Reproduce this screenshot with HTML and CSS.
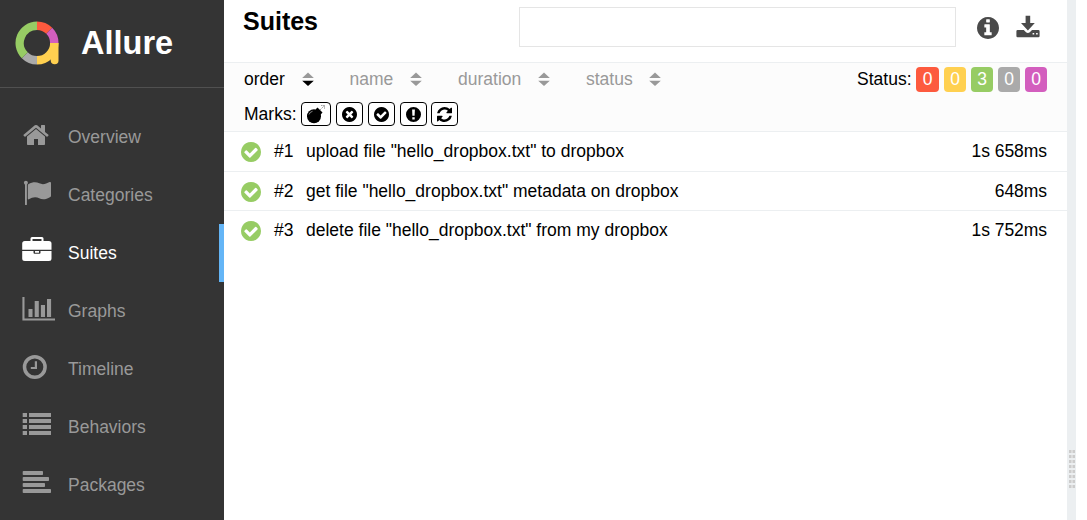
FILE: index.html
```html
<!DOCTYPE html>
<html lang="en">
<head>
<meta charset="utf-8">
<title>Allure Report</title>
<link rel="stylesheet" href="styles.css">
</head>
<body>
<svg class="defs" aria-hidden="true">
  <symbol id="check" viewBox="128 128 1536 1536"><path d="M1412 734q0-28-18-46l-91-90q-19-19-45-19t-45 19l-408 407-226-226q-19-19-45-19t-45 19l-91 90q-18 18-18 46 0 27 18 45l362 362q19 19 45 19 27 0 46-19l543-543q18-18 18-45zm252 162q0 209-103 385.5t-279.5 279.5-385.5 103-385.5-103-279.5-279.5-103-385.5 103-385.5 279.5-279.5 385.5-103 385.5 103 279.5 279.5 103 385.5z"/></symbol>
  <symbol id="sorter" viewBox="0 0 12 14"><path class="up" d="M6 .5L11.8 6H.2z"/><path class="down" d="M.2 8.7h11.6L6 14z"/></symbol>
</svg>
<div class="app">
  <aside class="side">
    <div class="brand">
      <svg class="logo" width="44" height="44" viewBox="0 0 44 44" fill="none" stroke-width="8.4">
        <path stroke="#ffd050" d="M39.3 22A17.3 17.3 0 0 1 22 39.3"/>
        <path stroke="#aaa" d="M22 39.3A17.3 17.3 0 0 1 9.77 34.23"/>
        <path stroke="#97cc64" d="M9.77 34.23A17.3 17.3 0 0 1 22 4.7"/>
        <path stroke="#fd5a3e" d="M22 4.7A17.3 17.3 0 0 1 34.23 9.77"/>
        <path stroke="#d35ebe" d="M34.23 9.77A17.3 17.3 0 0 1 39.3 22"/>
        <path fill="#ffd050" d="M35.1 22h8.4v17.5q0 3.8-3.8 3.8t-4-3.8z"/>
      </svg>
      <span class="brand-name">Allure</span>
    </div>
    <nav class="nav">
      <a class="item"><svg class="nav-icon" viewBox="0 0 36 30"><path transform="translate(2 1) scale(.015625)" d="M1472 992v480q0 26-19 45t-45 19h-384v-384h-256v384h-384q-26 0-45-19t-19-45v-480q0-1 .5-3t.5-3l575-474 575 474q1 2 1 6zm223-69l-62 74q-8 9-21 11h-3q-13 0-21-7l-692-577-692 577q-12 8-24 7-13-2-21-11l-62-74q-8-10-7-23.5t11-21.5l719-599q32-26 76-26t76 26l244 204v-195q0-14 9-23t23-9h192q14 0 23 9t9 23v408l219 182q10 8 11 21.5t-7 23.5z"/></svg><span>Overview</span></a>
      <a class="item"><svg class="nav-icon" viewBox="0 0 36 30"><circle cx="5.9" cy="4.8" r="2"/><rect x="5" y="5" width="1.9" height="22" rx=".5"/><path d="M7.8 7.2q0-.5.5-.9c2.500-1.400 4.500-2 6.600-2 3.500 0 5.400 1.900 8 1.900 2.200 0 4.300-1.100 6.700-2.200q1.400-.4 1.400.9v13q0 .7-.7 1c-2.600 1.400-4.700 2.300-7 2.300-3.300 0-4.900-2-8.200-2-2.100 0-4.200.9-6.200 2.100q-1.100.4-1.100-.7z"/></svg><span>Categories</span></a>
      <a class="item active"><svg class="nav-icon" viewBox="0 0 36 30"><path fill-rule="evenodd" d="M10.500 5V2.600q0-1.500 1.500-1.500h10q1.500 0 1.500 1.500V5h5.400q2.600 0 2.600 2.600v6.200H2.200V7.600Q2.200 5 4.800 5zm2 0h9V3.100h-9zM2.200 15h11.300v1.800q0 1 1 1h5q1 0 1-1V15h11v7.500q0 2.500-2.600 2.500H4.800q-2.600 0-2.600-2.500zM15 15h4v1.700h-4z"/></svg><span>Suites</span></a>
      <a class="item"><svg class="nav-icon" viewBox="0 0 36 30"><path d="M2.400 3h2.100v21.500H35v2H2.400zM8.500 15h4v8h-4zM14.700 7h4.100v16h-4.100zM20.900 11H25v12h-4.100zM27 5h4.100v18H27z"/></svg><span>Graphs</span></a>
      <a class="item"><svg class="nav-icon" viewBox="0 0 36 30"><circle cx="14.800" cy="15" r="10.300" fill="none" stroke="currentColor" stroke-width="3.500"/><path d="M14.800 9.200h2.200v7.900h-6.200v-2.100h4z"/></svg><span>Timeline</span></a>
      <a class="item"><svg class="nav-icon" viewBox="0 0 36 30"><path d="M2.700 3H7v4H2.700zM9 3h22v4H9zM2.700 9H7v4H2.700zM9 9h22v4H9zM2.700 15H7v4H2.700zM9 15h22v4H9zM2.700 21H7v4H2.700zM9 21h22v4H9z"/></svg><span>Behaviors</span></a>
      <a class="item"><svg class="nav-icon" viewBox="0 0 36 30"><rect x="2.700" y="3" width="20.300" height="4" rx=".8"/><rect x="2.700" y="9" width="26.300" height="4" rx=".8"/><rect x="2.700" y="15" width="22.300" height="4" rx=".8"/><rect x="2.700" y="21" width="28.300" height="4" rx=".8"/></svg><span>Packages</span></a>
    </nav>
  </aside>
  <main class="main">
    <header class="head">
      <h1 class="title">Suites</h1>
      <input class="search" type="text" aria-label="Search">
      <svg class="info" width="22" height="22" viewBox="128 128 1536 1536"><path d="M1152 1376v-160q0-14-9-23t-23-9h-96v-512q0-14-9-23t-23-9h-320q-14 0-23 9t-9 23v160q0 14 9 23t23 9h96v320h-96q-14 0-23 9t-9 23v160q0 14 9 23t23 9h448q14 0 23-9t9-23zm-128-896v-160q0-14-9-23t-23-9h-192q-14 0-23 9t-9 23v160q0 14 9 23t23 9h192q14 0 23-9t9-23zm640 416q0 209-103 385.5t-279.5 279.5-385.5 103-385.5-103-279.5-279.5-103-385.5 103-385.5 279.5-279.5 385.5-103 385.5 103 279.5 279.5 103 385.5z"/></svg>
      <svg class="download" width="24" height="23" viewBox="0 0 24 23"><path fill-rule="evenodd" d="M9.600 0.700h4.600v7.200h4.600L11.900 15.500 5 7.900h4.600zM1.600 15h6.200l2.200 2.200q1.900 1.500 3.800 0L16 15h6.400q1.200 0 1.200 1.200v4.800q0 1.200-1.200 1.200H1.600Q.4 22.200.4 21v-4.800Q.4 15 1.600 15zm15 3v1.600h1.600V18zm3.500 0v1.600h1.600V18z"/></svg>
    </header>
    <section class="filters">
      <div class="line sort-line">
        <span class="sort on">order<svg width="12" height="14"><use href="#sorter"/></svg></span>
        <span class="sort">name<svg width="12" height="14"><use href="#sorter"/></svg></span>
        <span class="sort">duration<svg width="12" height="14"><use href="#sorter"/></svg></span>
        <span class="sort">status<svg width="12" height="14"><use href="#sorter"/></svg></span>
        <span class="status">Status:</span>
        <span class="badges"><b class="badge failed">0</b><b class="badge broken">0</b><b class="badge passed">3</b><b class="badge skipped">0</b><b class="badge unknown">0</b></span>
      </div>
      <div class="line mark-line">
        <span class="marks-label">Marks:</span>
        <span class="mark wide"><svg width="20" height="20" viewBox="0 0 20 20"><circle cx="8" cy="12.200" r="7"/><path d="M9.500 5.400l2-1.900 5 5-2 2.200z"/><path d="M3 10.500q1-2.700 3.500-3.200" fill="none" stroke="#aaa" stroke-width=".8"/><path d="M14 6l2.200-2.200M15 1.500h3.500v3.500M18.500 1.500l-2.300 2.300" fill="none" stroke="#888" stroke-width=".8" stroke-dasharray="1.500 .6"/></svg></span>
        <span class="mark"><svg width="15" height="15" viewBox="128 128 1536 1536"><path d="M1277 1122q0-26-19-45l-181-181 181-181q19-19 19-45 0-27-19-46l-90-90q-19-19-46-19-26 0-45 19l-181 181-181-181q-19-19-45-19-27 0-46 19l-90 90q-19 19-19 46 0 26 19 45l181 181-181 181q-19 19-19 45 0 27 19 46l90 90q19 19 46 19 26 0 45-19l181-181 181 181q19 19 45 19 27 0 46-19l90-90q19-19 19-46zm387-226q0 209-103 385.5t-279.5 279.5-385.5 103-385.5-103-279.5-279.5-103-385.5 103-385.5 279.5-279.5 385.5-103 385.5 103 279.5 279.5 103 385.5z"/></svg></span>
        <span class="mark"><svg width="15" height="15"><use href="#check"/></svg></span>
        <span class="mark"><svg width="15" height="15" viewBox="0 0 15 15"><path fill-rule="evenodd" d="M7.500 0a7.500 7.500 0 1 1 0 15 7.500 7.500 0 0 1 0-15zM6.100 2.500l.3 6.200h2.200l.3-6.200zM6.300 10.200v2.300h2.400v-2.300z"/></svg></span>
        <span class="mark last"><svg width="15" height="15" viewBox="128 128 1536 1536"><path d="M1639 1056q0 5-1 7-64 268-268 434.500t-478 166.500q-146 0-282.500-55t-243.500-157l-129 129q-19 19-45 19t-45-19-19-45v-448q0-26 19-45t45-19h448q26 0 45 19t19 45-19 45l-137 137q71 66 161 102t187 36q134 0 250-65t186-179q11-17 53-117 8-23 30-23h192q13 0 22.500 9.500t9.500 22.500zm25-800v448q0 26-19 45t-45 19h-448q-26 0-45-19t-19-45 19-45l138-138q-148-137-349-137-134 0-250 65t-186 179q-11 17-53 117-8 23-30 23h-199q-13 0-22.500-9.500t-9.500-22.500v-7q65-268 270-434.500t480-166.500q146 0 284 55.500t245 156.500l130-129q19-19 45-19t45 19 19 45z"/></svg></span>
      </div>
    </section>
    <div class="rows">
      <div class="row tall"><svg class="ok" width="20" height="20"><use href="#check"/></svg><span class="num">#1</span><span class="name">upload file "hello_dropbox.txt" to dropbox</span><span class="time">1s 658ms</span></div>
      <div class="row"><svg class="ok" width="20" height="20"><use href="#check"/></svg><span class="num">#2</span><span class="name">get file "hello_dropbox.txt" metadata on dropbox</span><span class="time">648ms</span></div>
      <div class="row end"><svg class="ok" width="20" height="20"><use href="#check"/></svg><span class="num">#3</span><span class="name">delete file "hello_dropbox.txt" from my dropbox</span><span class="time">1s 752ms</span></div>
    </div>
  </main>
  <div class="gutter"><div class="grip"></div></div>
</div>
</body>
</html>
```
FILE: styles.css
```css
* { box-sizing: border-box; }
body { margin: 0; background: #fff; font: 17.5px/20px "Liberation Sans", Arial, sans-serif; color: #000; }
svg { display: block; flex: none; fill: currentColor; }
.defs { position: absolute; width: 0; height: 0; }
.app { display: flex; height: 520px; overflow: hidden; }
.side { flex: none; width: 224px; background: #343434; color: #999; }
.brand { display: flex; height: 88px; padding: 21px 0 0 15px; border-bottom: 1px solid #505050; }
.logo { fill: none; }
.brand-name { margin: 3px 0 0 22px; font-size: 32.500px; line-height: 38px; font-weight: bold; color: #fff; }
.nav { padding-top: 20px; }
.item { display: flex; height: 58px; padding: 12px 0 0 20px; border-right: 5px solid transparent; }
.item span { margin: 7px 0 0 12px; }
.nav-icon { width: 36px; height: 30px; }
.active { color: #fff; border-right-color: #64b5f6; }
.main { flex: none; width: 843px; }
.head { display: flex; height: 63px; border-bottom: 1px solid #eceff1; color: #4a4a4a; }
.title { margin: 6px 0 0 19px; width: 276px; font-size: 25px; line-height: 30px; color: #000; }
.search { margin-top: 7px; width: 437px; height: 40px; padding: 0 10px; border: 1px solid #e5e5e5; background: #fff; font: inherit; outline: none; }
.info { margin: 17px 0 0 21px; }
.download { margin: 15px 0 0 17px; }
.filters { height: 69px; padding: 4px 20px 0; background: #fcfcfc; border-bottom: 1px solid #eceff1; }
.line { display: flex; }
.sort-line { height: 35px; }
.sort { display: flex; margin-right: 36px; line-height: 24px; color: #999; }
.sort svg { margin: 5px 0 0 16.700px; }
.sort.on { color: #000; }
.sort.on svg { --down: #000; color: #999; }
.down { fill: var(--down, currentColor); }
.status { margin-left: auto; line-height: 24px; }
.badges { display: flex; gap: 5px; margin-left: 4.500px; }
.badge { width: 22px; height: 25px; border-radius: 4px; line-height: 25px; text-align: center; font-weight: normal; color: #fff; }
.failed { width: 23px; background: #fd5a3e; }
.broken { background: #ffd050; }
.passed { background: #97cc64; }
.skipped { background: #aaa; }
.unknown { background: #d35ebe; }
.marks-label { width: 57px; line-height: 24px; }
.mark { display: flex; align-items: center; justify-content: center; width: 27px; height: 24px; margin-right: 5px; border: 1px solid #000; border-radius: 4px; background: #fff; }
.wide { width: 30px; }
.last { margin-left: -1px; }
.row { display: flex; height: 39px; padding: 9px 20px 0 17px; border-bottom: 1px solid #eceff1; }
.tall { height: 40px; }
.end { border-bottom: 0; }
.ok { margin-top: .7px; color: #97cc64; }
.num { width: 32px; margin-left: 13px; }
.name { flex: 1; }
.time { letter-spacing: -.05px; }
.gutter { flex: none; width: 9px; padding: 450px 1px 0 2px; background: #eceff1; }
.grip { height: 38px; background: repeating-linear-gradient(#0000 0 3px, #eceff1 3px 5px), repeating-linear-gradient(90deg, #ccc 0 2px, #ddd 2px 4px); }
```
